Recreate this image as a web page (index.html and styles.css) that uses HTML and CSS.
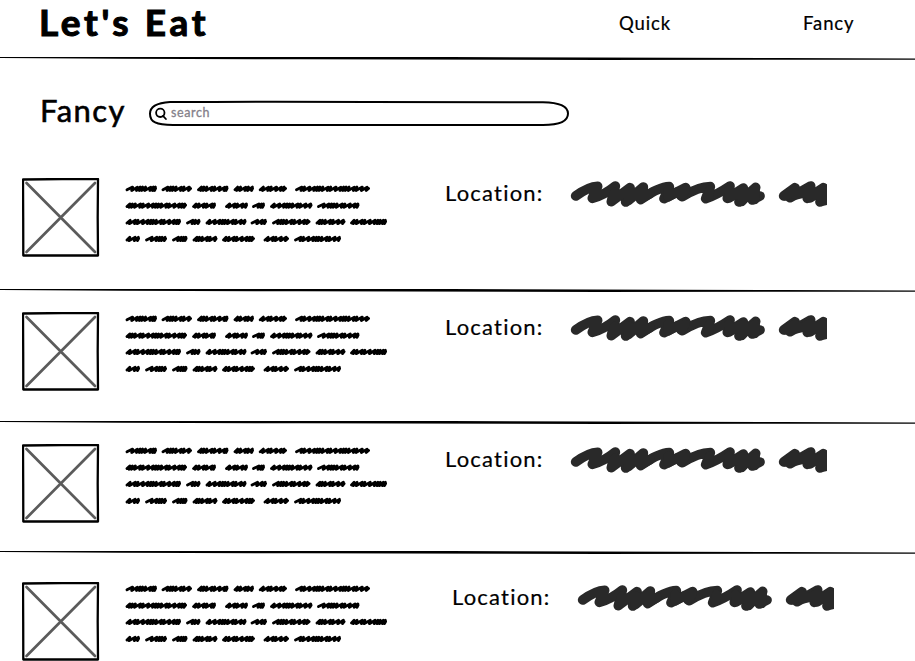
FILE: index.html
```html
<!DOCTYPE html>
<html lang="en">
<head>
<meta charset="utf-8">
<title>Let's Eat</title>
<link rel="stylesheet" href="styles.css">
</head>
<body>
<svg class="defs" aria-hidden="true">
  <symbol id="rule" viewBox="0 0 915 6" preserveAspectRatio="none">
    <path d="M0 1.1L120 1L450 1L780 2L915 2.5V3.8L600 3.9L300 3.3L120 2.8L0 2Z"/>
  </symbol>
  <symbol id="photo" viewBox="0 0 78 80">
    <path d="M4.5 5L73 74M73 5L4.5 74" fill="none" stroke="#5b5b5b" stroke-width="2.7" stroke-linecap="round"/>
    <path d="M1 1.5L40 1L76 1L75.7 40L76 77.5L40 77.5L1.3 77.5L1.2 40Z" fill="none" stroke="#000" stroke-width="2.3" stroke-linejoin="round"/>
  </symbol>
  <symbol id="address" viewBox="410 130 772 90">
    <g fill="none" stroke="#292929" stroke-width="29" stroke-linecap="round" stroke-linejoin="round">
      <path d="M427 181Q465 153 493 152L477 188Q510 180 546 151L534 198L590 156L577 199L630 154L622 192Q675 154 708 153L692 189L757 156L747 183Q795 153 831 153L817 189Q850 178 890 151L882 188L930 157L917 199L967 155L957 193L980 181M1051 181L1085 156L1070 186L1132 151L1122 188L1170 156L1160 199L1195 150"/>
      <path d="M545 170L538 190L565 175L588 170L585 195L605 178L630 165L624 188L650 174M704 165L705 183L730 170L755 165L742 180M828 165L826 184M886 165L888 186L908 175L930 165L925 197L945 176L965 165L964 191M1056 180L1085 165L1088 177L1110 172L1132 162L1130 187L1150 174L1170 165L1165 197L1195 190"/>
    </g>
  </symbol>
  <symbol id="copy" viewBox="0 0 270 62"><g id="copy-lines"></g></symbol>
</svg>

<header class="top">
  <h1>Let's Eat</h1>
  <nav><a class="quick">Quick</a><a class="fancy">Fancy</a></nav>
</header>
<svg class="rule"><use href="#rule"/></svg>

<section class="heading">
  <h2>Fancy</h2>
  <div class="search">
    <svg class="outline" viewBox="0 0 422 27"><path d="M22 2.1Q120 1.3 220 2L395 2.2C412 2.5 420 7 420 13.5C420 21 411 25 395 25H25C8 25 2 22 2 13.7C2 7 9 3 22 2.1Z"/></svg>
    <svg class="lens" viewBox="0 0 12 13"><circle cx="5.3" cy="5.8" r="4.2"/><path d="M8 8.9L10.9 12"/></svg>
    <span>search</span>
  </div>
</section>

<main>
  <article class="row first">
    <svg class="photo"><use href="#photo"/></svg>
    <svg class="copy"><use href="#copy"/></svg>
    <div class="place"><span>Location:</span><svg><use href="#address"/></svg></div>
  </article>
  <svg class="rule"><use href="#rule"/></svg>
  <article class="row second">
    <svg class="photo"><use href="#photo"/></svg>
    <svg class="copy"><use href="#copy"/></svg>
    <div class="place"><span>Location:</span><svg><use href="#address"/></svg></div>
  </article>
  <svg class="rule"><use href="#rule"/></svg>
  <article class="row third">
    <svg class="photo"><use href="#photo"/></svg>
    <svg class="copy"><use href="#copy"/></svg>
    <div class="place"><span>Location:</span><svg><use href="#address"/></svg></div>
  </article>
  <svg class="rule"><use href="#rule"/></svg>
  <article class="row fourth">
    <svg class="photo"><use href="#photo"/></svg>
    <svg class="copy"><use href="#copy"/></svg>
    <div class="place"><span>Location:</span><svg><use href="#address"/></svg></div>
  </article>
</main>
<script src="scribble.js"></script>
</body>
</html>
```

FILE: styles.css
```css
* { box-sizing: border-box; }
body {
  margin: 0;
  height: 661px;
  overflow: hidden;
  background: #fff;
  color: #000;
  font-family: Lato, "Open Sans", sans-serif;
}
svg { display: block; flex: none; }
.defs { position: absolute; width: 0; height: 0; }
h1, h2 { margin: 0; white-space: nowrap; }

.top {
  display: flex;
  justify-content: space-between;
  height: 56px;
  padding: 0 57px 0 39px;
}
h1 {
  font-size: 37px;
  line-height: 44px;
  font-weight: 700;
  letter-spacing: 3.6px;
  -webkit-text-stroke: 1.1px #000;
}
nav {
  display: flex;
  gap: 132px;
  font-size: 18.5px;
  line-height: 46px;
  letter-spacing: 0.9px;
  -webkit-text-stroke: 0.2px #000;
}
.quick { width: 52px; }
.fancy { width: 55px; }
.rule { width: 100%; height: 6px; }

.heading {
  display: flex;
  height: 95px;
  padding-left: 40px;
}
h2 {
  width: 108px;
  padding-top: 28px;
  font-size: 31px;
  line-height: 40px;
  font-weight: 400;
  letter-spacing: 1.4px;
  -webkit-text-stroke: 0.6px #000;
}
.search {
  position: relative;
  display: flex;
  align-items: center;
  gap: 4px;
  width: 422px;
  height: 27px;
  margin-top: 38px;
  padding-left: 7px;
}
.outline { position: absolute; inset: 0; width: 422px; height: 27px; }
.outline path, .lens { fill: none; stroke: #000; stroke-width: 2; }
.lens { width: 12px; height: 13px; stroke-width: 1.8; stroke-linecap: round; }
.search span {
  margin-top: -3px;
  color: #85818a;
  font-size: 12.5px;
  letter-spacing: 0.6px;
  -webkit-text-stroke: 0.3px #85818a;
}

.row {
  display: flex;
  align-items: flex-start;
  padding-left: 22px;
}
.first { height: 131px; --photo: 21px; --copy: 27px; --place: 22px; }
.second { height: 126px; --photo: 18px; --copy: 20px; --place: 19px; }
.third { height: 124px; --photo: 18px; --copy: 20px; --place: 19px; }
.fourth { height: 111px; --photo: 26px; --copy: 28px; --place: 27px; }
.photo { width: 78px; height: 80px; margin-top: var(--photo); }
.copy { width: 270px; height: 62px; margin: var(--copy) 0 0 20px; }
.place {
  display: flex;
  margin: var(--place) 0 0 55px;
}
.fourth .place { margin-left: 62px; }
.place span {
  width: 125px;
  font-size: 22px;
  line-height: 28px;
  letter-spacing: 1.2px;
  -webkit-text-stroke: 0.2px #000;
}
.place svg { width: 257.33px; height: 30px; }
```

FILE: scribble.js
```js
// Each line lists the start and end of its scribbled words.
const lines = [
  [[5.5,37],[41.5,72],[77,108.5],[113.5,134],[138.7,167],[175,250]],
  [[5.5,67],[72,96],[105,128],[132,145],[150,192.5],[197,239.5]],
  [[5.5,61],[66,80.5],[85.5,126.5],[130.5,147],[152,190.5],[195.5,225.5],[230,267]],
  [[5.5,20],[25,47],[52,67.5],[72.5,97.5],[102,135],[143.5,169],[174,221]]
];
const centers = [4.8, 21.6, 38, 55];
const strides = [5.6, 5, 3, 2.6, 3.2, 5.4, 2.8];
let path = "";
lines.forEach((words, row) => {
  const y = centers[row];
  words.forEach(([start, end], word) => {
    let x = start + 1.5, i = row * 2 + word;
    path += `M${x} ${y + 1}`;
    while (x < end - 3.4) {
      const next = Math.min(x + strides[i++ % strides.length], end - 1.6);
      path += `L${next.toFixed(1)} ${y - 1.7}L${(next - 0.9).toFixed(1)} ${y + 1.7}`;
      x = next - 0.2;
    }
    path += `L${end - 1.4} ${y - 0.4}`;
  });
});
document.getElementById("copy-lines").innerHTML =
  `<path d="${path}" fill="none" stroke="#000" stroke-width="2.8" stroke-linecap="round" stroke-linejoin="round"/>`;
```
